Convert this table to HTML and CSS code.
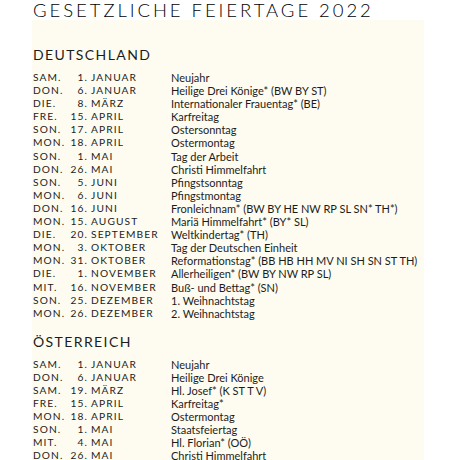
FILE: index.html
```html
<!DOCTYPE html>
<html lang="de">
<head>
    <meta charset="UTF-8">
    <title>Gesetzliche Feiertage 2022</title>
    <link rel="stylesheet" href="styles.css">
</head>
<body>
    <h1 class="title">Gesetzliche Feiertage 2022</h1>

    <div class="sheet">
        <!-- Deutschland -->
        <h2 class="country">Deutschland</h2>
        <div class="holidays">
            <div class="row"><span class="wd">Sam.</span><span class="day">1.</span><span class="month">Januar</span><span class="name">Neujahr</span></div>
            <div class="row"><span class="wd">Don.</span><span class="day">6.</span><span class="month">Januar</span><span class="name">Heilige Drei Könige* (BW BY ST)</span></div>
            <div class="row"><span class="wd">Die.</span><span class="day">8.</span><span class="month">März</span><span class="name">Internationaler Frauentag* (BE)</span></div>
            <div class="row"><span class="wd">Fre.</span><span class="day">15.</span><span class="month">April</span><span class="name">Karfreitag</span></div>
            <div class="row"><span class="wd">Son.</span><span class="day">17.</span><span class="month">April</span><span class="name">Ostersonntag</span></div>
            <div class="row"><span class="wd">Mon.</span><span class="day">18.</span><span class="month">April</span><span class="name">Ostermontag</span></div>
            <div class="row"><span class="wd">Son.</span><span class="day">1.</span><span class="month">Mai</span><span class="name">Tag der Arbeit</span></div>
            <div class="row"><span class="wd">Don.</span><span class="day">26.</span><span class="month">Mai</span><span class="name">Christi Himmelfahrt</span></div>
            <div class="row"><span class="wd">Son.</span><span class="day">5.</span><span class="month">Juni</span><span class="name">Pfingstsonntag</span></div>
            <div class="row"><span class="wd">Mon.</span><span class="day">6.</span><span class="month">Juni</span><span class="name">Pfingstmontag</span></div>
            <div class="row"><span class="wd">Don.</span><span class="day">16.</span><span class="month">Juni</span><span class="name">Fronleichnam* (BW BY HE NW RP SL SN* TH*)</span></div>
            <div class="row"><span class="wd">Mon.</span><span class="day">15.</span><span class="month">August</span><span class="name">Mariä Himmelfahrt* (BY* SL)</span></div>
            <div class="row"><span class="wd">Die.</span><span class="day">20.</span><span class="month">September</span><span class="name">Weltkindertag* (TH)</span></div>
            <div class="row"><span class="wd">Mon.</span><span class="day">3.</span><span class="month">Oktober</span><span class="name">Tag der Deutschen Einheit</span></div>
            <div class="row"><span class="wd">Mon.</span><span class="day">31.</span><span class="month">Oktober</span><span class="name">Reformationstag* (BB HB HH MV NI SH SN ST TH)</span></div>
            <div class="row"><span class="wd">Die.</span><span class="day">1.</span><span class="month">November</span><span class="name">Allerheiligen* (BW BY NW RP SL)</span></div>
            <div class="row"><span class="wd">Mit.</span><span class="day">16.</span><span class="month">November</span><span class="name">Buß- und Bettag* (SN)</span></div>
            <div class="row"><span class="wd">Son.</span><span class="day">25.</span><span class="month">Dezember</span><span class="name">1. Weihnachtstag</span></div>
            <div class="row"><span class="wd">Mon.</span><span class="day">26.</span><span class="month">Dezember</span><span class="name">2. Weihnachtstag</span></div>
        </div>

        <!-- Österreich -->
        <h2 class="country">Österreich</h2>
        <div class="holidays">
            <div class="row"><span class="wd">Sam.</span><span class="day">1.</span><span class="month">Januar</span><span class="name">Neujahr</span></div>
            <div class="row"><span class="wd">Don.</span><span class="day">6.</span><span class="month">Januar</span><span class="name">Heilige Drei Könige</span></div>
            <div class="row"><span class="wd">Sam.</span><span class="day">19.</span><span class="month">März</span><span class="name">Hl. Josef* (K ST T V)</span></div>
            <div class="row"><span class="wd">Fre.</span><span class="day">15.</span><span class="month">April</span><span class="name">Karfreitag*</span></div>
            <div class="row"><span class="wd">Mon.</span><span class="day">18.</span><span class="month">April</span><span class="name">Ostermontag</span></div>
            <div class="row"><span class="wd">Son.</span><span class="day">1.</span><span class="month">Mai</span><span class="name">Staatsfeiertag</span></div>
            <div class="row"><span class="wd">Mit.</span><span class="day">4.</span><span class="month">Mai</span><span class="name">Hl. Florian* (OÖ)</span></div>
            <div class="row"><span class="wd">Don.</span><span class="day">26.</span><span class="month">Mai</span><span class="name">Christi Himmelfahrt</span></div>
        </div>
    </div>
</body>
</html>
```

FILE: styles.css
```css
* {
    box-sizing: border-box;
    margin: 0;
    padding: 0;
}

body {
    font-family: Lato, 'Liberation Sans', sans-serif;
    background-color: #fff;
    color: #1c1c1c;
    width: 460px;
    height: 460px;
    overflow: hidden;
}

.title {
    margin-left: 33px;
    font-size: 18.5px;
    font-weight: 300;
    line-height: 20px;
    letter-spacing: 2.95px;
    text-transform: uppercase;
    white-space: nowrap;
    color: #000;
}

.sheet {
    margin-left: 32px;
    width: 392px;
    min-height: 440px;
    padding: 27px 0 0 1px;
    background-color: #fefcf1;
}

.country {
    font-size: 14px;
    font-weight: 400;
    line-height: 16px;
    letter-spacing: 1.4px;
    text-transform: uppercase;
    margin-bottom: 8px;
}

.holidays {
    margin-bottom: 14px;
}

.row {
    display: grid;
    grid-template-columns: 33px 22px 83px 1fr;
    height: 13.1px;
    line-height: 13px;
    white-space: nowrap;
}

.wd, .day, .month {
    font-size: 10.2px;
    letter-spacing: 1.1px;
    text-transform: uppercase;
}

.day {
    text-align: right;
}

.month {
    padding-left: 3px;
}

.name {
    font-size: 11px;
}
```
